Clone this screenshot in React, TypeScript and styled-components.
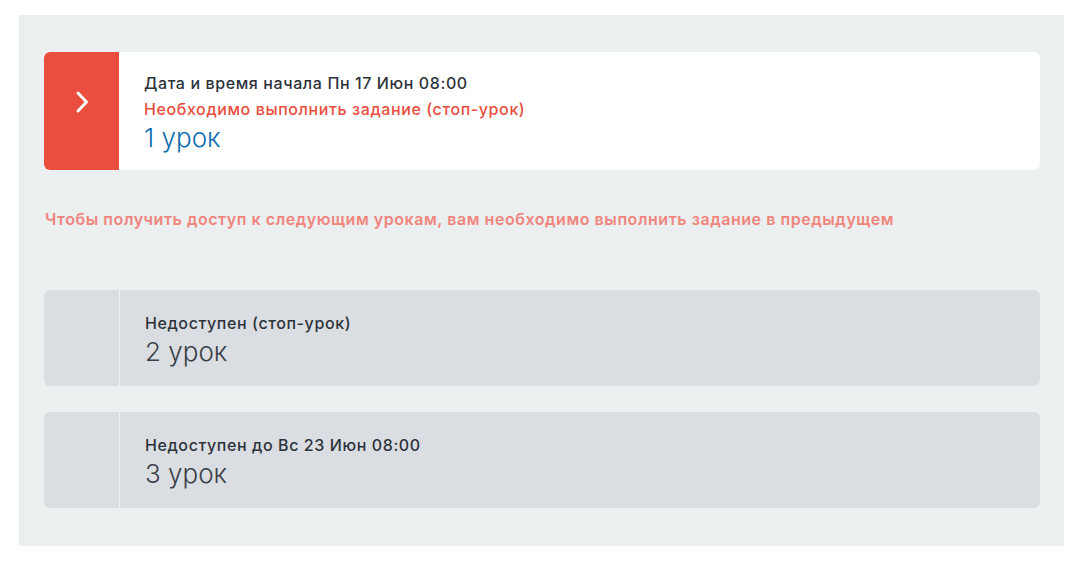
import React, { FunctionComponent } from "react";
import styled, { createGlobalStyle } from "styled-components";

interface Lesson {
    title: string;
    name: string;
}

const lessons: Lesson[] = [
    { title: "Недоступен (стоп-урок)", name: "2 урок" },
    { title: "Недоступен до Вс 23 Июн 08:00", name: "3 урок" },
];

const App: FunctionComponent = () => {
    return (
        <>
            <GlobalStyle />
            <Page>
                <Card active>
                    <Side active>
                        <svg width="20" height="24" viewBox="0 0 20 24" fill="none">
                            <path d="M6 3 L14.5 12 L6 21" stroke="#fff" strokeWidth="3" strokeLinecap="round" strokeLinejoin="round" />
                        </svg>
                    </Side>
                    <Body>
                        <Title>Дата и время начала Пн 17 Июн 08:00</Title>
                        <Warning>Необходимо выполнить задание (стоп-урок)</Warning>
                        <Name active>1 урок</Name>
                    </Body>
                </Card>

                <Notice>Чтобы получить доступ к следующим урокам, вам необходимо выполнить задание в предыдущем</Notice>

                <List>
                    {lessons.map((l) => (
                        <Card key={l.name}>
                            <Side />
                            <Body>
                                <Title>{l.title}</Title>
                                <Name>{l.name}</Name>
                            </Body>
                        </Card>
                    ))}
                </List>
            </Page>
        </>
    );
}

export default App;


const GlobalStyle = createGlobalStyle`
    body {
        margin: 0;
        background: #fff;
        font-family: Inter, "Noto Sans", sans-serif;
    }
`

const Page = styled.div`
    margin: 15px 15px 0 19px;
    width: 996px;
    padding: 37px 24px 38px 25px;
    background-color: #ebeff0;
`

const Card = styled.div<{ active?: boolean }>`
    display: flex;
    border-radius: 6px;
    overflow: hidden;
    background-color: ${p => p.active ? "#fff" : "#dadee2"};
    min-height: ${p => p.active ? "118px" : "96px"};
`

const Side = styled.div<{ active?: boolean }>`
    width: 75px;
    flex-shrink: 0;
    display: flex;
    align-items: flex-start;
    justify-content: center;
    padding-top: 38px;
    background-color: ${p => p.active ? "#e94e3e" : "transparent"};
    border-right: ${p => p.active ? "none" : "1px solid #eef0f2"};
`

const Body = styled.div`
    display: flex;
    flex-direction: column;
    justify-content: center;
    padding: 2px 25px 0;
`

const Title = styled.div`
    font-size: 16px;
    font-weight: 500;
    line-height: 25px;
    letter-spacing: 0.6px;
    color: #2d323b;
`

const Warning = styled(Title)`
    color: #e94e3e;
    line-height: 26px;
`

const Name = styled.div<{ active?: boolean }>`
    font-size: 26px;
    font-weight: 300;
    line-height: 31px;
    color: ${p => p.active ? "#0f6db0" : "#3a3f47"};
`

const Notice = styled.div`
    margin: 38px 0 60px 1px;
    font-size: 16px;
    font-weight: 600;
    line-height: 22px;
    letter-spacing: 0.55px;
    color: #f0857d;
`

const List = styled.div`
    display: flex;
    flex-direction: column;
    gap: 26px;
`
